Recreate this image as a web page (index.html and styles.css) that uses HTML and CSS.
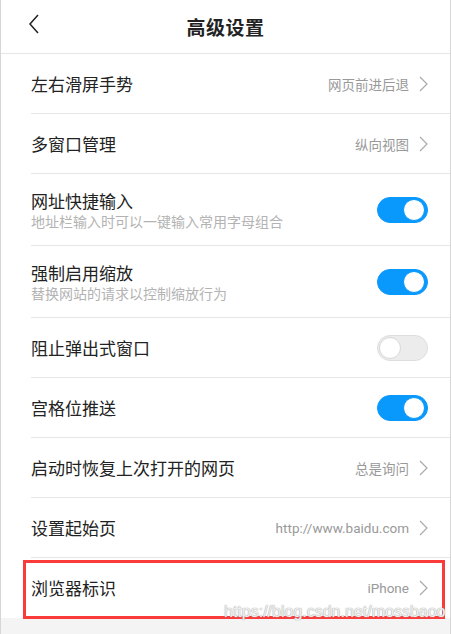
FILE: index.html
```html
<!DOCTYPE html>
<html lang="zh-CN">
<head>
  <meta charset="UTF-8">
  <meta name="viewport" content="width=device-width, initial-scale=1.0">
  <title>高级设置</title>
  <link rel="stylesheet" href="styles.css">
</head>
<body>
<div class="screen">
  <div class="header">
    <svg class="back" width="12" height="20" viewBox="0 0 12 20">
      <path d="M10 1 L2 10 L10 19" fill="none" stroke="#222" stroke-width="1.5"/>
    </svg>
    <h1>高级设置</h1>
  </div>

  <div class="list">
    <div class="row">
      <span class="label">左右滑屏手势</span>
      <span class="value">网页前进后退</span>
      <svg class="arrow" width="9" height="16" viewBox="0 0 9 16"><path d="M1 1 L8 8 L1 15"/></svg>
    </div>
    <div class="row">
      <span class="label">多窗口管理</span>
      <span class="value">纵向视图</span>
      <svg class="arrow" width="9" height="16" viewBox="0 0 9 16"><path d="M1 1 L8 8 L1 15"/></svg>
    </div>
    <div class="row tall">
      <div class="text">
        <span class="label">网址快捷输入</span>
        <span class="desc">地址栏输入时可以一键输入常用字母组合</span>
      </div>
      <span class="switch on"></span>
    </div>
    <div class="row tall">
      <div class="text">
        <span class="label">强制启用缩放</span>
        <span class="desc">替换网站的请求以控制缩放行为</span>
      </div>
      <span class="switch on"></span>
    </div>
    <div class="row">
      <span class="label">阻止弹出式窗口</span>
      <span class="switch"></span>
    </div>
    <div class="row">
      <span class="label">宫格位推送</span>
      <span class="switch on"></span>
    </div>
    <div class="row">
      <span class="label">启动时恢复上次打开的网页</span>
      <span class="value">总是询问</span>
      <svg class="arrow" width="9" height="16" viewBox="0 0 9 16"><path d="M1 1 L8 8 L1 15"/></svg>
    </div>
    <div class="row">
      <span class="label">设置起始页</span>
      <span class="value">http://www.baidu.com</span>
      <svg class="arrow" width="9" height="16" viewBox="0 0 9 16"><path d="M1 1 L8 8 L1 15"/></svg>
    </div>
    <div class="row last">
      <span class="label">浏览器标识</span>
      <span class="value">iPhone</span>
      <svg class="arrow" width="9" height="16" viewBox="0 0 9 16"><path d="M1 1 L8 8 L1 15"/></svg>
      <div class="mark"></div>
    </div>
  </div>
  <div class="footer"></div>
  <div class="watermark">https://blog.csdn.net/mossbaoo</div>
</div>
</body>
</html>
```

FILE: styles.css
```css
:root {
  --blue: #0998fc;
  --line: #e6e6e6;
  --text: #222;
  --gray: #999;
}
body {
  margin: 0;
  font-family: "Noto Sans CJK SC", "Noto Sans", sans-serif;
  color: var(--text);
  background: #fff;
}
.screen {
  position: relative;
  width: 449px;
  height: 634px;
  border-left: 1px solid #d6d6d6;
  border-right: 1px solid #d6d6d6;
  overflow: hidden;
}
.header {
  position: relative;
  height: 53px;
  border-bottom: 1px solid var(--line);
  display: flex;
  align-items: center;
  justify-content: center;
}
.back {
  position: absolute;
  left: 27px;
  top: 14px;
}
.header h1 {
  margin: 0;
  font-size: 19px;
  font-weight: bold;
  letter-spacing: 0.5px;
}
.list {
  padding-left: 30px;
}
.row {
  position: relative;
  height: 59px;
  border-bottom: 1px solid var(--line);
  display: flex;
  align-items: center;
  padding-right: 22px;
}
.row.tall {
  height: 71px;
}
.row.last {
  border-bottom: none;
  height: 60px;
}
.text {
  display: flex;
  flex-direction: column;
  flex: 1;
}
.label {
  font-size: 17px;
  line-height: 22px;
  flex: 1;
}
.desc {
  font-size: 14px;
  line-height: 18px;
  color: #b3b3b3;
}
.value {
  font-family: Roboto, "Noto Sans CJK SC", sans-serif;
  font-size: 13.5px;
  color: var(--gray);
  margin-right: 10px;
}
.arrow {
  fill: none;
  stroke: #aaa;
  stroke-width: 1.2;
}
.switch {
  position: relative;
  width: 49px;
  height: 24px;
  border-radius: 13px;
  background: #ececec;
  border: 1px solid #dedede;
}
.switch::after {
  content: "";
  position: absolute;
  left: 1px;
  top: 1px;
  width: 20px;
  height: 20px;
  border-radius: 50%;
  background: #fff;
  border: 1px solid #d8d8d8;
}
.switch.on {
  background: var(--blue);
  border-color: var(--blue);
}
.switch.on::after {
  left: 25px;
  border-color: var(--blue);
}
.mark {
  position: absolute;
  left: -8px;
  right: 5px;
  top: 2px;
  bottom: -1px;
  border: 3px solid #fb3a3a;
}
.footer {
  height: 16px;
  background: #f4f4f4;
}
.watermark {
  position: absolute;
  left: 223px;
  top: 603px;
  font-family: "Liberation Sans", Arial, sans-serif;
  font-size: 16px;
  color: rgba(255, 255, 255, 0.85);
  text-shadow: 0 0 1px #999, 0 0 1px #bbb;
}
```
